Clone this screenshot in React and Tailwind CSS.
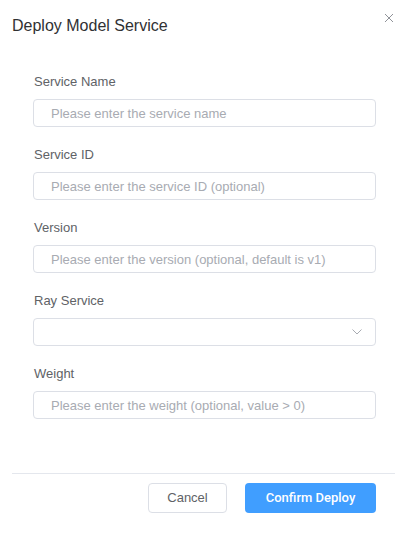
import React from "react";

const fields = [
  { label: "Service Name", placeholder: "Please enter the service name" },
  { label: "Service ID", placeholder: "Please enter the service ID (optional)" },
  { label: "Version", placeholder: "Please enter the version (optional, default is v1)" },
  { label: "Ray Service", select: true },
  { label: "Weight", placeholder: "Please enter the weight (optional, value > 0)" },
];

export default function App() {
  return (
    <div className="relative flex h-[542px] flex-col bg-white font-['Liberation_Sans',Arial,sans-serif]">
      <div className="px-3 pt-[14px]">
        <h2 className="text-[16px] leading-6 text-[#303133]">Deploy Model Service</h2>
      </div>
      <button className="absolute right-[13px] top-[13px] flex h-[10px] w-[10px] items-center justify-center text-[#909399]">
        <svg width="10" height="10" viewBox="0 0 10 10" fill="none" stroke="currentColor" strokeWidth="1">
          <path d="M1 1L9 9M9 1L1 9" />
        </svg>
      </button>
      <div className="flex flex-col gap-[18px] px-[33px] pt-[34px] pr-[31px]">
        {fields.map((f) => (
          <div key={f.label} className="flex flex-col">
            <label className="mb-[7px] pl-px text-[13px] leading-5 text-[#606266]">{f.label}</label>
            {f.select ? (
              <div className="flex h-[28px] items-center justify-end rounded-[4px] border border-[#dcdfe6] pr-[13px]">
                <svg width="10" height="6" viewBox="0 0 10 6" fill="none" stroke="#a8abb2" strokeWidth="1">
                  <path d="M0.5 0.5L5 5L9.5 0.5" />
                </svg>
              </div>
            ) : (
              <input
                className="h-[28px] rounded-[4px] border border-[#dcdfe6] pl-[17px] text-[13px] text-[#606266] outline-none placeholder:text-[#a8abb2]"
                placeholder={f.placeholder}
              />
            )}
          </div>
        ))}
      </div>
      <div className="mx-3 mt-auto flex justify-end gap-[18px] border-t border-[#e4e7ed] pb-[29px] pr-[19px] pt-[9px]">
        <button className="h-[30px] w-[79px] rounded-[4px] border border-[#dcdfe6] bg-white text-[13px] text-[#606266]">
          Cancel
        </button>
        <button className="h-[30px] w-[131px] rounded-[4px] bg-[#409eff] font-['Roboto',sans-serif] text-[13px] font-medium text-white">
          Confirm Deploy
        </button>
      </div>
    </div>
  );
}
